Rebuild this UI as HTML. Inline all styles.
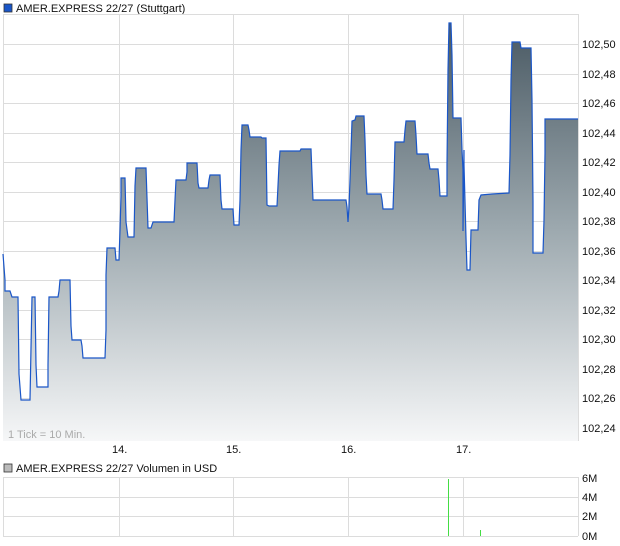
<!DOCTYPE html>
<html><head><meta charset="utf-8"><style>
html,body{margin:0;padding:0;background:#fff;}
svg{display:block;font-family:"Liberation Sans",Arial,sans-serif;}
</style></head><body>
<svg width="620" height="546" viewBox="0 0 620 546" xmlns="http://www.w3.org/2000/svg">
<defs>
<linearGradient id="g" gradientUnits="userSpaceOnUse" x1="0" y1="14" x2="0" y2="441">
<stop offset="0" stop-color="#45555f"/>
<stop offset="0.5" stop-color="#9ca8ae"/>
<stop offset="1" stop-color="#f6f7f8"/>
</linearGradient>
</defs>
<rect x="4" y="4" width="8" height="8" fill="#1a56c8" stroke="#333" stroke-width="0.8"/>
<text x="16" y="12" font-size="11" fill="#111">AMER.EXPRESS 22/27 (Stuttgart)</text>
<g stroke="#dcdcdc" stroke-width="1">
<line x1="3" y1="14.5" x2="578" y2="14.5"/>
<line x1="3" y1="44.5" x2="578" y2="44.5"/><line x1="3" y1="74.5" x2="578" y2="74.5"/><line x1="3" y1="103.5" x2="578" y2="103.5"/><line x1="3" y1="133.5" x2="578" y2="133.5"/><line x1="3" y1="162.5" x2="578" y2="162.5"/><line x1="3" y1="192.5" x2="578" y2="192.5"/><line x1="3" y1="221.5" x2="578" y2="221.5"/><line x1="3" y1="251.5" x2="578" y2="251.5"/><line x1="3" y1="280.5" x2="578" y2="280.5"/><line x1="3" y1="310.5" x2="578" y2="310.5"/><line x1="3" y1="339.5" x2="578" y2="339.5"/><line x1="3" y1="369.5" x2="578" y2="369.5"/><line x1="3" y1="398.5" x2="578" y2="398.5"/><line x1="3" y1="428.5" x2="578" y2="428.5"/>
<line x1="3.5" y1="14" x2="3.5" y2="441"/><line x1="119.5" y1="14" x2="119.5" y2="441"/><line x1="233.5" y1="14" x2="233.5" y2="441"/><line x1="348.5" y1="14" x2="348.5" y2="441"/><line x1="463.5" y1="14" x2="463.5" y2="441"/><line x1="578.5" y1="14" x2="578.5" y2="441"/>
<line x1="3" y1="440.5" x2="578" y2="440.5"/>
</g>
<polygon fill="url(#g)" stroke="none" points="3,441 3,254 5,280 5,291 10,291 12,297 18,297 19,374 21,400 30,400 31,348 32,297 35,297 36,365 37,387 48,387 48,365 49,297 58,297 59,291 60,280 70,280 71,326 72,340 81,340 82,346 83,358 105,358 106,330 106,275 107,248 115,248 116,260 119,260 120,230 121,196 121,178 125,178 126,222 128,237 134,237 135,186 136,168 146,168 147,198 148,228 151,228 153,222 174,222 175,200 176,180 186,180 187,172 187,163 197,163 198,183 199,188 208,188 209,180 210,175 220,175 221,200 222,209 233,209 234,225 239,225 240,200 241,150 242,125 248,125 249,130 250,137 261,137 262,138 266,138 267,205 269,206 277,206 279,165 280,151 300,151 301,149 311,149 312,175 313,200 346,200 347,207 348,222 349,207 350,180 351,150 352,121 355,120 356,116 364,116 365,140 366,175 367,194 381,194 382,200 383,209 393,209 394,180 395,142 404,142 405,130 406,121 415,121 416,135 417,154 428,154 429,163 430,169 438,169 439,180 440,196 447,196 447,165 448,70 449,23 451,23 452,55 453,118 461,118 462,150 463,170 463,231 464,150 464,165 466,238 467,270 470,270 471,230 478,230 479,200 481,195 492,194 509,193 510,155 511,80 512,42 520,42 521,48 531,48 532,100 533,201 533,253 543,253 544,220 545,153 545,119 578,119 578,441"/>
<polyline fill="none" stroke="#1a56c8" stroke-width="1.2" points="3,254 5,280 5,291 10,291 12,297 18,297 19,374 21,400 30,400 31,348 32,297 35,297 36,365 37,387 48,387 48,365 49,297 58,297 59,291 60,280 70,280 71,326 72,340 81,340 82,346 83,358 105,358 106,330 106,275 107,248 115,248 116,260 119,260 120,230 121,196 121,178 125,178 126,222 128,237 134,237 135,186 136,168 146,168 147,198 148,228 151,228 153,222 174,222 175,200 176,180 186,180 187,172 187,163 197,163 198,183 199,188 208,188 209,180 210,175 220,175 221,200 222,209 233,209 234,225 239,225 240,200 241,150 242,125 248,125 249,130 250,137 261,137 262,138 266,138 267,205 269,206 277,206 279,165 280,151 300,151 301,149 311,149 312,175 313,200 346,200 347,207 348,222 349,207 350,180 351,150 352,121 355,120 356,116 364,116 365,140 366,175 367,194 381,194 382,200 383,209 393,209 394,180 395,142 404,142 405,130 406,121 415,121 416,135 417,154 428,154 429,163 430,169 438,169 439,180 440,196 447,196 447,165 448,70 449,23 451,23 452,55 453,118 461,118 462,150 463,170 463,231 464,150 464,165 466,238 467,270 470,270 471,230 478,230 479,200 481,195 492,194 509,193 510,155 511,80 512,42 520,42 521,48 531,48 532,100 533,201 533,253 543,253 544,220 545,153 545,119 578,119"/>
<g font-size="11" fill="#111">
<text x="582" y="48">102,50</text><text x="582" y="78">102,48</text><text x="582" y="107">102,46</text><text x="582" y="137">102,44</text><text x="582" y="166">102,42</text><text x="582" y="196">102,40</text><text x="582" y="225">102,38</text><text x="582" y="255">102,36</text><text x="582" y="284">102,34</text><text x="582" y="314">102,32</text><text x="582" y="343">102,30</text><text x="582" y="373">102,28</text><text x="582" y="402">102,26</text><text x="582" y="432">102,24</text>
<text x="112" y="453">14.</text><text x="226" y="453">15.</text><text x="341" y="453">16.</text><text x="456" y="453">17.</text>
</g>
<text x="8" y="438" font-size="11" fill="#aaa">1 Tick = 10 Min.</text>
<rect x="4" y="464" width="8" height="8" fill="#bbb" stroke="#333" stroke-width="0.8"/>
<text x="16" y="472" font-size="11" fill="#111">AMER.EXPRESS 22/27 Volumen in USD</text>
<g stroke="#dcdcdc" stroke-width="1">
<line x1="3" y1="477.5" x2="578" y2="477.5"/><line x1="3" y1="497.5" x2="578" y2="497.5"/><line x1="3" y1="516.5" x2="578" y2="516.5"/><line x1="3" y1="536.5" x2="578" y2="536.5"/>
<line x1="3.5" y1="477" x2="3.5" y2="536"/><line x1="119.5" y1="477" x2="119.5" y2="536"/><line x1="233.5" y1="477" x2="233.5" y2="536"/><line x1="348.5" y1="477" x2="348.5" y2="536"/><line x1="463.5" y1="477" x2="463.5" y2="536"/><line x1="578.5" y1="477" x2="578.5" y2="536"/>
</g>
<line x1="448.5" y1="479" x2="448.5" y2="536" stroke="#44dd44" stroke-width="1"/>
<line x1="480.5" y1="530" x2="480.5" y2="536" stroke="#44dd44" stroke-width="1"/>
<g font-size="11" fill="#111">
<text x="582" y="482">6M</text><text x="582" y="501">4M</text><text x="582" y="520">2M</text><text x="582" y="540">0M</text>
</g>
</svg>
</body></html>
